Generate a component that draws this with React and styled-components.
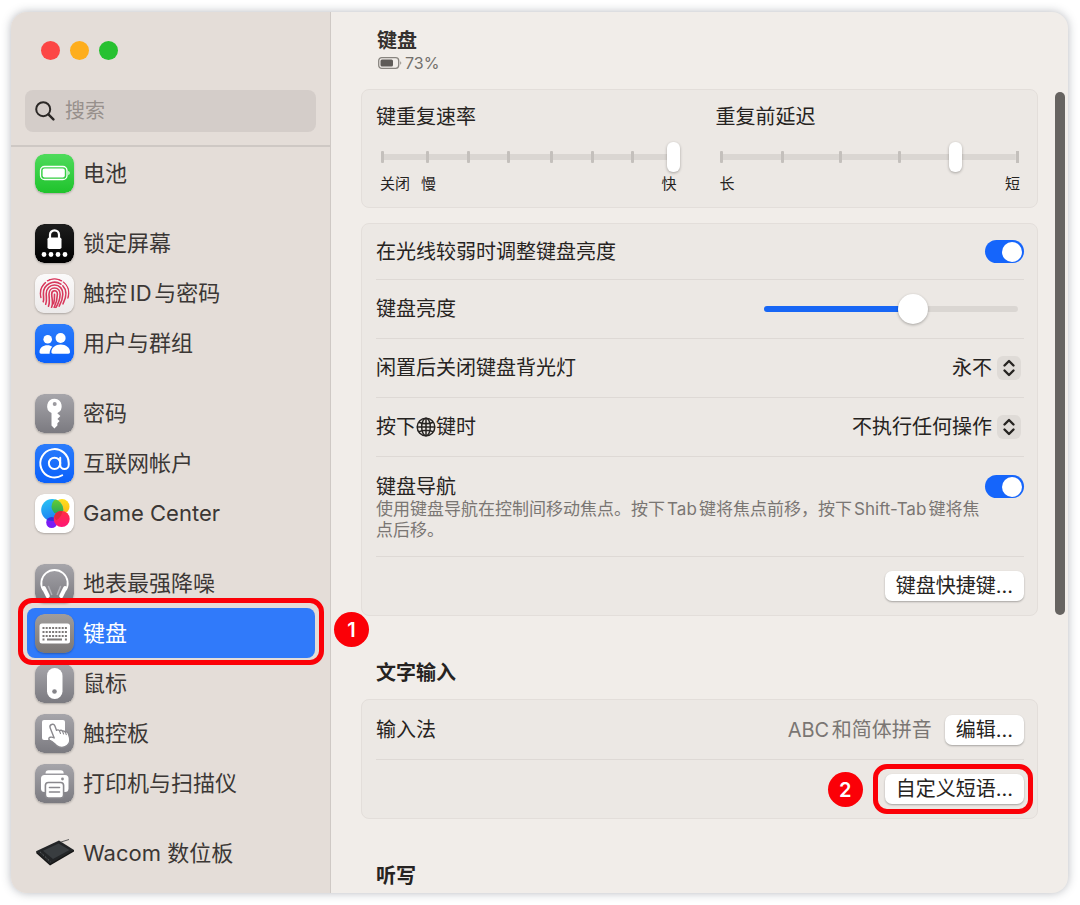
import { useState } from "react";
import styled, { createGlobalStyle } from "styled-components";

const GlobalStyle = createGlobalStyle`
  *, *::before, *::after {
    box-sizing: border-box;
  }
  body {
    margin: 0;
    background: #fff;
    font-family: Inter, "Noto Sans CJK SC", sans-serif;
    text-autospace: normal;
    color: #262321;
  }
`;

/* ---------- icons ---------- */

const Grad = ({ id, from, to }) => (
  <linearGradient id={id} x1="0" y1="0" x2="0" y2="1">
    <stop offset="0" stopColor={from} />
    <stop offset="1" stopColor={to} />
  </linearGradient>
);

const Tile = ({ id, from, to, children }) => (
  <TileSvg viewBox="0 0 39 39" aria-hidden="true">
    <defs>
      <Grad id={id} from={from} to={to} />
    </defs>
    <rect width="39" height="39" rx="9" fill={`url(#${id})`} />
    {children}
  </TileSvg>
);

const GreyTile = ({ id, children }) => (
  <Tile id={id} from="#a6a5aa" to="#7b7a80">{children}</Tile>
);

const BatteryIcon = () => (
  <Tile id="battery" from="#4fdb5c" to="#1fc32c">
    <rect x="5.5" y="12.5" width="26.5" height="13" rx="4" fill="none" stroke="#fff" strokeWidth="1.3" />
    <rect x="7.6" y="14.6" width="22.2" height="8.8" rx="2" fill="#fff" />
    <path d="M33.4 17c1.6.4 1.6 3.7 0 4.1z" fill="#fff" />
  </Tile>
);

const LockIcon = () => (
  <Tile id="lock" from="#1d1d1d" to="#000">
    <path d="M15 15v-4.200a4.500 4.500 0 0 1 9 0V15" fill="none" stroke="#fff" strokeWidth="2.200" />
    <rect x="12.500" y="13.500" width="14" height="11.500" rx="1.800" fill="#fff" />
    {[9, 16, 23, 30].map((x) => (
      <circle key={x} cx={x} cy="30.500" r="2.400" fill="#fff" />
    ))}
  </Tile>
);

const TouchIdIcon = () => (
  <Tile id="touch" from="#fbfafa" to="#eceaea">
    <clipPath id="touch-clip"><circle cx="19.500" cy="19.300" r="15" /></clipPath>
    <g clipPath="url(#touch-clip)" fill="none" stroke="#d8385c" strokeWidth="1.600" strokeLinecap="round">
      <path d="M12.500 6.700a14.200 14.200 0 0 1 14 0" />
      <path d="M5.800 23.500c-1.300-5.500.2-11 4.600-14.800" />
      <path d="M28.500 8c5 4 6.300 10.200 4.500 16" />
      <path d="M8.200 27.800c1-2.400.2-4.600.2-8.300a11.200 11.200 0 0 1 17.500-9.300" />
      <path d="M27.800 11.800c4.200 4.400 3.600 11.500.2 18" />
      <path d="M10.700 30.300c1.500-3.500.5-7 .5-10.500 0-5 3.600-8.800 8.300-8.800 5.200 0 8.500 4 8.300 9.200-.1 4-1.300 8-3.600 12" />
      <path d="M13.400 32.300c1.800-4 .6-8.300.6-12.300 0-3.400 2.300-6 5.500-6 3.500 0 5.700 2.600 5.600 6.200-.1 4.600-1.500 9-4.300 13.500" />
      <path d="M16.500 33.500c2.200-4.500.2-9 .2-13.300 0-2 1.100-3.400 2.800-3.400 1.900 0 3 1.400 2.900 3.500-.1 4.700-1 8.700-3.200 13" />
      <path d="M19.500 20.300c.1 3.700 0 6.500-.9 9.500" />
    </g>
  </Tile>
);

const UsersIcon = () => (
  <Tile id="users" from="#2b7cfb" to="#0a60fb">
    <circle cx="12.700" cy="15.300" r="4.300" fill="#fff" />
    <path d="M4.500 28c0-4 3.500-6.700 8-6.700 2 0 3.600.6 4.800 1.500-1.700 1.700-2.600 3.700-2.700 6.900H6c-1 0-1.500-.6-1.500-1.700z" fill="#fff" />
    <circle cx="25.600" cy="14" r="5" fill="#fff" />
    <path d="M16.400 28c0-4.300 4-7.600 9.300-7.600S35 23.700 35 28c0 1.100-.6 1.700-1.700 1.700H18c-1 0-1.600-.6-1.600-1.700z" fill="#fff" />
  </Tile>
);

const KeyIcon = () => (
  <GreyTile id="key">
    <path
      fillRule="evenodd"
      d="M19.700 4.700a7.500 7.500 0 0 0-3.200 14.300v12.600l2.900 2.900 3-3.100v-2.200l2.200-2.200-2.200-2.100 3-2.900-2.900-2.500v-.6a7.500 7.500 0 0 0-2.800-14.200zm0 3.300a2 2 0 1 1 0 4 2 2 0 0 1 0-4z"
      fill="#fff"
    />
  </GreyTile>
);

const InternetIcon = () => (
  <Tile id="internet" from="#2b7cfb" to="#0a60fb">
    <g transform="translate(2.500 2.300) scale(1.420)" fill="none" stroke="#fff" strokeWidth="1.400" strokeLinecap="round">
      <circle cx="12" cy="12" r="4" />
      <path d="M16 8v5a3 3 0 0 0 6 0v-1a10 10 0 1 0-4.600 8.400" />
    </g>
  </Tile>
);

const GameCenterIcon = () => (
  <Tile id="game" from="#fff" to="#fff">
    <defs>
      <linearGradient id="gc-blue" x1="0.200" y1="0" x2="0.500" y2="1">
        <stop offset="0" stopColor="#29c4f4" />
        <stop offset="1" stopColor="#1c7df2" />
      </linearGradient>
      <Grad id="gc-yellow" from="#fbe11f" to="#fdb714" />
      <Grad id="gc-red" from="#ff2f42" to="#ff1477" />
      <Grad id="gc-green" from="#6fd02e" to="#1fa35c" />
      <clipPath id="gc-clip"><circle cx="17.200" cy="16" r="11" /></clipPath>
    </defs>
    <circle cx="27" cy="12.500" r="7.500" fill="url(#gc-yellow)" />
    <circle cx="16.700" cy="28.500" r="5.500" fill="#7a1cf5" />
    <circle cx="17.200" cy="16" r="11" fill="url(#gc-blue)" />
    <g clipPath="url(#gc-clip)">
      <circle cx="25" cy="12.500" r="8.500" fill="url(#gc-green)" />
      <circle cx="16.700" cy="28.500" r="5.500" fill="#3a2bd8" />
    </g>
    <circle cx="26.700" cy="25" r="8" fill="url(#gc-red)" />
    <path d="M19.200 22.200a8 8 0 0 1 8-5.100 11 11 0 0 1-6 9.200 8 8 0 0 1-2-4.100z" fill="#e0293d" />
  </Tile>
);

const HeadphonesIcon = () => (
  <GreyTile id="headphones">
    <path d="M8.200 26A13.200 13.200 0 1 1 30.800 26" fill="none" stroke="#fff" strokeWidth="1.800" />
    <g strokeLinecap="round" fill="none">
      <path d="M13.500 22.500l3.200 8M25.500 22.500l-3.200 8" stroke="#b4b3b8" strokeWidth="1.500" />
      <path d="M8.800 24l4 8M30.200 24l-4 8" stroke="#fff" strokeWidth="4" />
    </g>
  </GreyTile>
);

const KeyboardIcon = () => (
  <Tile id="keyboard" from="#a09d9c" to="#7a7675">
    <rect x="4.500" y="9.500" width="30.500" height="20" rx="2.500" fill="#fff" />
    {[13, 17, 21].map((y) =>
      [7.5, 10.7, 13.9, 17.1, 20.3, 23.5, 26.7, 29.9].map((x) => (
        <rect key={`${x}-${y}`} x={x} y={y} width="2" height="2" fill="#7d7978" />
      ))
    )}
    <path d="M7.500 24.500h2v2h-2zM12 24.500h15v2H12zM29.900 24.500h2v2h-2z" fill="#7d7978" />
  </Tile>
);

const MouseIcon = () => (
  <GreyTile id="mouse">
    <rect x="12" y="4" width="15.500" height="31" rx="7.700" fill="#fff" />
    <circle cx="19.500" cy="27.500" r="2.300" fill="#858489" />
  </GreyTile>
);

const TrackpadIcon = () => (
  <GreyTile id="trackpad">
    <rect x="7" y="6" width="23" height="20" rx="2" fill="#fff" />
    <path
      d="M16.500 10.500c1.500-.7 2.800.1 3.400 1.600l1.700 4.300c.7-.8 2.300-.8 2.900.4.900-.9 2.500-.7 3 .5 1-.6 2.300-.3 2.800.8 1.300-.6 2.500.1 3 1.400 1.500 3.800 3.300 9-1.300 12.100-3.600 2.500-7.700 2.200-10.800-.4-2-1.700-3.700-3.900-6.400-4.900-1.400-.6-1.300-2.600.3-3 1.500-.4 2.900 0 4.100.7l-4-10.100c-.6-1.500.1-2.900 1.300-3.400z"
      fill="#fff"
      stroke="#8a898e"
      strokeWidth="1.400"
      strokeLinejoin="round"
    />
    <path d="M24.500 17l1 2.500M27.600 17.500l1 2.500M30.400 18.300l.9 2.300" fill="none" stroke="#8a898e" strokeWidth="1.100" strokeLinecap="round" />
  </GreyTile>
);

const PrinterIcon = () => (
  <GreyTile id="printer">
    <path d="M10.500 9.500c0-2 1-3.200 3-3.200h12.200c2 0 3 1.200 3 3.200z" fill="#fff" />
    <rect x="6" y="11" width="27.500" height="17" rx="3.500" fill="#fff" />
    <circle cx="27.500" cy="15" r="1.400" fill="#8d8c91" />
    <rect x="10.400" y="18.500" width="18.200" height="15.500" rx="3" fill="#fff" stroke="#89888d" strokeWidth="1.600" />
    <path d="M14.500 23.500h10M14.500 28h10" stroke="#89888d" strokeWidth="1.600" strokeLinecap="round" />
  </GreyTile>
);

const WacomIcon = () => (
  <TileSvg viewBox="0 0 39 39" aria-hidden="true" $flat>
    <path d="M1 17.500l.6 2L15 31.500l24-14V16z" fill="#151515" />
    <path d="M1 17.300L24 6.500 39 16 15 30z" fill="#232527" />
    <path d="M8 16.800l15.500-7.300 11 6.500L18 25z" fill="#393d40" />
    <path d="M5 17.800l10.500 10" stroke="#5c5f61" strokeWidth="1" strokeDasharray="2 1.500" />
    <path d="M26 8l8-2.500" stroke="#5b5b5b" strokeWidth="1" />
  </TileSvg>
);

const GlobeIcon = () => (
  <GlobeSvg viewBox="0 0 20 20" role="img" aria-label="地球仪">
    <g fill="none" stroke="currentColor" strokeWidth="1.500">
      <circle cx="10" cy="10" r="8.800" />
      <ellipse cx="10" cy="10" rx="4.300" ry="8.800" />
      <path d="M10 1v18M1 10h18M2.700 5.200c4.500 1.900 10.100 1.900 14.600 0M2.700 14.800c4.500-1.900 10.100-1.900 14.600 0" />
    </g>
  </GlobeSvg>
);

const SearchIcon = () => (
  <svg width="20" height="20" viewBox="0 0 20 20" fill="none" stroke="#2b2826" strokeWidth="2" strokeLinecap="round" aria-hidden="true">
    <circle cx="8.200" cy="8.200" r="7" />
    <path d="M13.400 13.400l5 5" strokeWidth="2.400" />
  </svg>
);

const SmallBattery = () => (
  <svg width="25" height="12" viewBox="0 0 25 12" aria-hidden="true">
    <rect x="0.700" y="0.700" width="20" height="10.600" rx="3" fill="none" stroke="#88847f" strokeWidth="1.300" />
    <rect x="2.500" y="2.500" width="12.500" height="7" rx="1.500" fill="#5f5b58" />
    <path d="M22.300 4.300c1.300.4 1.300 3 0 3.400z" fill="#88847f" />
  </svg>
);

/* ---------- data ---------- */

const groups = [
  [{ name: "电池", icon: BatteryIcon }],
  [
    { name: "锁定屏幕", icon: LockIcon },
    { name: "触控ID与密码", icon: TouchIdIcon },
    { name: "用户与群组", icon: UsersIcon },
  ],
  [
    { name: "密码", icon: KeyIcon },
    { name: "互联网帐户", icon: InternetIcon },
    { name: "Game Center", icon: GameCenterIcon },
  ],
  [
    { name: "地表最强降噪", icon: HeadphonesIcon },
    { name: "键盘", icon: KeyboardIcon, mark: "1" },
    { name: "鼠标", icon: MouseIcon },
    { name: "触控板", icon: TrackpadIcon },
    { name: "打印机与扫描仪", icon: PrinterIcon },
  ],
  [{ name: "Wacom 数位板", icon: WacomIcon }],
];

/* ---------- parts ---------- */

const SteppedSlider = ({ id, label, steps, value, onChange, marks }) => (
  <SliderBlock>
    <RowLabel as="label" htmlFor={id}>{label}</RowLabel>
    <SliderStack>
      <Ticks $steps={steps}>
        {steps.map((s, i) => <i key={i} />)}
      </Ticks>
      <SteppedRange id={id} type="range" value={value} onChange={(e) => onChange(+e.target.value)} />
    </SliderStack>
    <Marks>
      {marks.map((m) => <span key={m}>{m}</span>)}
    </Marks>
  </SliderBlock>
);

const Popup = ({ id, options }) => (
  <PopupWrap>
    <PopupSelect id={id}>
      {options.map((o) => <option key={o}>{o}</option>)}
    </PopupSelect>
    <Stepper viewBox="0 0 24 24" aria-hidden="true">
      <path d="M7.500 9.500L12 5l4.500 4.500M7.500 14.500L12 19l4.500-4.500" />
    </Stepper>
  </PopupWrap>
);

const App = () => {
  const [repeat, setRepeat] = useState(100);
  const [delay, setDelay] = useState(79);
  const [brightness, setBrightness] = useState(60);

  return (
    <>
      <GlobalStyle />
      <Window>
        <Sidebar>
          <Lights>
            <Light type="button" aria-label="关闭" $color="#fc4645" />
            <Light type="button" aria-label="最小化" $color="#feae1d" />
            <Light type="button" aria-label="缩放" $color="#27c131" />
          </Lights>
          <Search>
            <SearchIcon />
            <SearchInput type="search" placeholder="搜索" aria-label="搜索" />
          </Search>
          <Nav>
            {groups.map((group, i) => (
              <NavGroup key={i}>
                {group.map(({ name, icon: Icon, mark }) => (
                  <NavItem key={name} href="#" $active={!!mark}>
                    <Icon />
                    {name}
                    {mark && <ItemFrame />}
                    {mark && <ItemBadge>{mark}</ItemBadge>}
                  </NavItem>
                ))}
              </NavGroup>
            ))}
          </Nav>
        </Sidebar>

        <Main>
          <Header>
            <Title>键盘</Title>
            <Charge><SmallBattery />73%</Charge>
          </Header>
          <Body>
            <Content>
              <SliderCard>
                <SteppedSlider
                  id="repeat"
                  label="键重复速率"
                  steps={[45, 41, 40, 43, 41, 40, 41]}
                  value={repeat}
                  onChange={setRepeat}
                  marks={["关闭", "慢", "快"]}
                />
                <SteppedSlider
                  id="delay"
                  label="重复前延迟"
                  steps={[60, 58, 59, 57, 61]}
                  value={delay}
                  onChange={setDelay}
                  marks={["长", "短"]}
                />
              </SliderCard>

              <Card>
                <Row $height={55}>
                  <RowLabel as="label" htmlFor="auto">在光线较弱时调整键盘亮度</RowLabel>
                  <Switch id="auto" type="checkbox" defaultChecked />
                </Row>
                <Row>
                  <RowLabel as="label" htmlFor="brightness">键盘亮度</RowLabel>
                  <LevelRange
                    id="brightness"
                    type="range"
                    value={brightness}
                    $value={brightness}
                    onChange={(e) => setBrightness(+e.target.value)}
                  />
                </Row>
                <Row>
                  <RowLabel as="label" htmlFor="idle">闲置后关闭键盘背光灯</RowLabel>
                  <Popup id="idle" options={["永不"]} />
                </Row>
                <Row>
                  <RowLabel as="label" htmlFor="globe">按下<GlobeIcon />键时</RowLabel>
                  <Popup id="globe" options={["不执行任何操作"]} />
                </Row>
                <Row $height={100} $top>
                  <div>
                    <RowLabel as="label" htmlFor="navigation">键盘导航</RowLabel>
                    <Hint>使用键盘导航在控制间移动焦点。按下Tab键将焦点前移，按下Shift-Tab键将焦点后移。</Hint>
                  </div>
                  <Switch id="navigation" type="checkbox" defaultChecked />
                </Row>
                <Row $end>
                  <Button type="button">键盘快捷键...</Button>
                </Row>
              </Card>

              <SectionTitle>文字输入</SectionTitle>
              <Card>
                <Row>
                  <RowLabel>输入法</RowLabel>
                  <Sources>
                    ABC和简体拼音
                    <Button type="button">编辑...</Button>
                  </Sources>
                </Row>
                <Row $end>
                  <Marked>
                    <Button type="button">自定义短语...</Button>
                    <ButtonFrame />
                    <ButtonBadge>2</ButtonBadge>
                  </Marked>
                </Row>
              </Card>

              <SectionTitle>听写</SectionTitle>
            </Content>
            <ScrollThumb />
          </Body>
        </Main>
      </Window>
    </>
  );
};

/* ---------- styles ---------- */

const Window = styled.div`
  display: flex;
  height: calc(100vh - 24px);
  margin: 12px 12px 12px 11px;
  border-radius: 16px;
  overflow: hidden;
  background: #f1ede9;
  box-shadow: 0 0 10px rgba(50, 55, 70, 0.35);
`;

const Sidebar = styled.aside`
  position: relative;
  z-index: 1;
  flex: none;
  width: 320px;
  padding-top: 29px;
  background: #e4ddd8;
  border-right: 1px solid #cfc9c5;
`;

const Lights = styled.div`
  display: flex;
  gap: 10px;
  padding-left: 30px;
`;

const Light = styled.button`
  width: 19px;
  height: 19px;
  padding: 0;
  border: 0;
  border-radius: 50%;
  background: ${(p) => p.$color};
`;

const Search = styled.label`
  display: flex;
  align-items: center;
  gap: 10px;
  height: 42px;
  margin: 30px 14px 13px;
  padding: 0 10px;
  border-radius: 8px;
  background: #d4cdc9;
`;

const SearchInput = styled.input`
  flex: 1;
  min-width: 0;
  padding: 0;
  border: 0;
  outline: 0;
  background: none;
  font: inherit;
  font-size: 20px;
  &::placeholder {
    color: #97908c;
  }
`;

const Nav = styled.nav`
  display: flex;
  flex-direction: column;
  gap: 20px;
  padding: 1px 15px 0 16px;
  border-top: 2px solid #cec8c4;
`;

const NavGroup = styled.div`
  display: flex;
  flex-direction: column;
`;

const NavItem = styled.a`
  position: relative;
  z-index: ${(p) => (p.$active ? 1 : 0)};
  display: flex;
  align-items: center;
  gap: 9px;
  height: 50px;
  padding-left: 8px;
  border-radius: 8px;
  font-size: 22px;
  line-height: 24px;
  text-decoration: none;
  white-space: nowrap;
  color: ${(p) => (p.$active ? "#fff" : "#3b3735")};
  background: ${(p) => (p.$active ? "#307afa" : "transparent")};
`;

const TileSvg = styled.svg`
  flex: none;
  width: 39px;
  height: 39px;
  border-radius: 9px;
  box-shadow: ${(p) => (p.$flat ? "none" : "0 1px 2px rgba(0, 0, 0, 0.25)")};
`;

const Frame = styled.span`
  position: absolute;
  border: 5px solid #fb0007;
  border-radius: 14px;
  pointer-events: none;
`;

const ItemFrame = styled(Frame)`
  inset: -10px -9px -7px;
`;

const ButtonFrame = styled(Frame)`
  inset: -10px -9px -10px -12px;
`;

const Badge = styled.span`
  position: absolute;
  display: flex;
  align-items: center;
  justify-content: center;
  width: 35px;
  height: 35px;
  border-radius: 50%;
  background: #fb0007;
  color: #fff;
  font-size: 20px;
  font-weight: 600;
`;

const ItemBadge = styled(Badge)`
  right: -54px;
  top: 4px;
`;

const ButtonBadge = styled(Badge)`
  left: -57px;
  top: -2px;
`;

const Main = styled.main`
  display: flex;
  flex-direction: column;
  flex: 1;
  min-width: 0;
`;

const Header = styled.header`
  padding: 17px 46px 16px;
`;

const Title = styled.h1`
  margin: 0;
  font-size: 20px;
  line-height: 24px;
  font-weight: 600;
  color: #35312f;
`;

const Charge = styled.div`
  display: flex;
  align-items: center;
  gap: 2px;
  padding-left: 1px;
  font-size: 16px;
  line-height: 20px;
  color: #73706c;
`;

const Body = styled.div`
  display: flex;
  flex: 1;
  min-height: 0;
  padding: 0 3px 0 30px;
`;

const Content = styled.div`
  flex: 1;
  min-width: 0;
  margin-right: 17px;
`;

const ScrollThumb = styled.div`
  width: 10px;
  height: 65%;
  margin-top: 3px;
  border-radius: 5px;
  background: #666360;
`;

const Card = styled.section`
  padding: 0 13px 0 14px;
  border: 1px solid #e3deda;
  border-radius: 8px;
  background: #ece8e4;
`;

const SliderCard = styled(Card)`
  display: grid;
  grid-template-columns: minmax(0, 76fr) minmax(0, 77fr);
  gap: 35px;
  margin-bottom: 15px;
  padding-top: 15px;
  padding-bottom: 13px;
`;

const SliderBlock = styled.div`
  display: flex;
  flex-direction: column;
`;

const SliderStack = styled.div`
  display: grid;
  align-items: center;
  margin-top: 13px;
  & > * {
    grid-area: 1 / 1;
  }
`;

const Ticks = styled.div`
  display: grid;
  grid-template-columns: ${(p) => p.$steps.map((s) => `${s}fr`).join(" ")};
  align-items: center;
  height: 12px;
  margin: 0 5px;
  border-right: 3px solid #c4c0bc;
  background: linear-gradient(#dad6d2, #dad6d2) center / 100% 6px no-repeat;
  i {
    width: 3px;
    height: 12px;
    border-radius: 1px;
    background: #c4c0bc;
  }
`;

const Range = styled.input`
  appearance: none;
  width: 100%;
  height: 30px;
  margin: 0;
  background: none;
  &::-webkit-slider-thumb {
    appearance: none;
    height: 30px;
    border: 0;
    background: #fff;
    box-shadow: 0 1px 3px rgba(0, 0, 0, 0.3);
  }
`;

const SteppedRange = styled(Range)`
  &::-webkit-slider-thumb {
    width: 13px;
    border-radius: 6px;
  }
`;

const LevelRange = styled(Range)`
  width: 254px;
  margin-right: 6px;
  &::-webkit-slider-runnable-track {
    height: 6px;
    border-radius: 3px;
    background: linear-gradient(to right, #1766f5 ${(p) => p.$value}%, #dad6d2 ${(p) => p.$value}%);
  }
  &::-webkit-slider-thumb {
    width: 30px;
    margin-top: -12px;
    border-radius: 50%;
  }
`;

const Marks = styled.div`
  display: flex;
  gap: 11px;
  margin-top: 2px;
  padding: 0 4px;
  font-size: 15px;
  line-height: 20px;
  span:last-child {
    margin-left: auto;
  }
`;

const Row = styled.div`
  display: flex;
  align-items: ${(p) => (p.$top ? "flex-start" : "center")};
  justify-content: ${(p) => (p.$end ? "flex-end" : "space-between")};
  gap: 4px;
  height: ${(p) => p.$height || 59}px;
  padding-top: ${(p) => (p.$top ? 18 : 0)}px;
  & + & {
    border-top: 1px solid #ded9d5;
  }
`;

const RowLabel = styled.span`
  display: flex;
  align-items: center;
  font-size: 20px;
  line-height: 24px;
`;

const Hint = styled.p`
  margin: 0;
  font-size: 17px;
  line-height: 21px;
  color: #7a7673;
`;

const GlobeSvg = styled.svg`
  width: 20px;
  height: 20px;
`;

const Switch = styled.input`
  appearance: none;
  flex: none;
  display: flex;
  align-items: center;
  width: 39px;
  height: 23px;
  margin: 0;
  padding: 0 2px;
  border-radius: 12px;
  background: #cfcac6;
  &::before {
    content: "";
    width: 20px;
    height: 20px;
    border-radius: 50%;
    background: #fff;
  }
  &:checked {
    justify-content: flex-end;
    background: #1565fb;
  }
`;

const PopupWrap = styled.div`
  display: grid;
  align-items: center;
  margin-right: 3px;
  & > * {
    grid-area: 1 / 1;
  }
`;

const PopupSelect = styled.select`
  appearance: none;
  padding: 0 29px 0 0;
  border: 0;
  background: none;
  font: inherit;
  font-size: 20px;
  line-height: 24px;
  color: inherit;
  text-align-last: right;
`;

const Stepper = styled.svg`
  justify-self: end;
  width: 24px;
  height: 24px;
  border-radius: 6px;
  background: #dfdbd7;
  fill: none;
  stroke: #262321;
  stroke-width: 2.4;
  stroke-linecap: round;
  stroke-linejoin: round;
  pointer-events: none;
`;

const Button = styled.button`
  height: 30px;
  padding: 0 11px;
  border: 0;
  border-radius: 7px;
  background: #fff;
  box-shadow: 0 1px 2px rgba(0, 0, 0, 0.3);
  font: inherit;
  font-size: 20px;
  line-height: 24px;
  color: #262321;
  white-space: nowrap;
`;

const Sources = styled.div`
  display: flex;
  align-items: center;
  gap: 13px;
  font-size: 20px;
  line-height: 24px;
  color: #7a7673;
`;

const Marked = styled.div`
  position: relative;
  display: flex;
`;

const SectionTitle = styled.h2`
  margin: 45px 15px 14px;
  font-size: 20px;
  line-height: 24px;
  font-weight: 600;
`;

export default App;
